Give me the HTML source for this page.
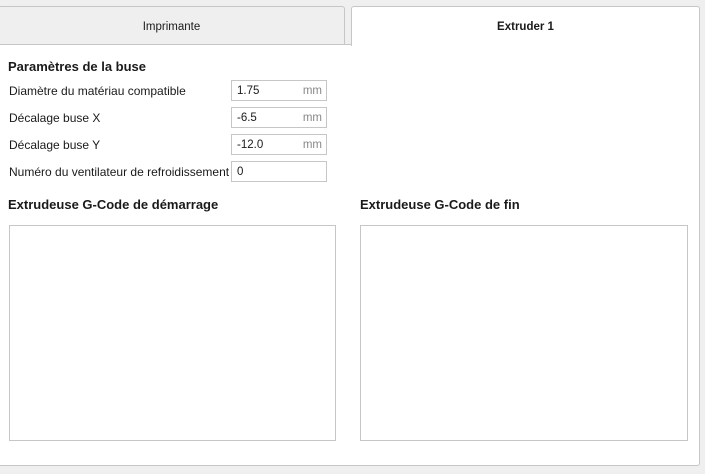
<!DOCTYPE html>
<html><head><style>
body{margin:0;width:705px;height:474px;background:#efefef;font-family:"Liberation Sans",sans-serif;position:relative;overflow:hidden;color:#1a1a1a}
.tab{position:absolute;top:6px;height:39px;border:1px solid #c6c6c6;border-bottom:none;border-radius:3px 3px 0 0;box-sizing:border-box;text-align:center;line-height:40px;font-size:11.5px}
.panel{position:absolute;left:-2px;top:44px;width:702px;height:422px;background:#fff;border:1px solid #c6c6c6;box-sizing:border-box;border-radius:0 0 3px 3px}
.lbl{position:absolute;left:9px;font-size:12px}
.box{position:absolute;left:231px;width:96px;height:21px;border:1px solid #c6c6c6;box-sizing:border-box;font-size:11.5px;line-height:20px;padding-left:5px;background:#fff}
.box span{position:absolute;right:4px;color:#888}
h{position:absolute;font-weight:bold;font-size:13px}
.ta{position:absolute;top:225px;height:216px;border:1px solid #c6c6c6;box-sizing:border-box;background:#fff}
</style></head><body>
<div class="tab" style="left:-2px;width:347px;background:#efefef;">Imprimante</div>
<div class="panel"></div>
<div class="tab" style="left:351px;width:349px;background:#fff;height:40px;font-weight:bold;">Extruder 1</div>
<h style="left:8px;top:59px">Paramètres de la buse</h>
<div class="lbl" style="top:84px">Diamètre du matériau compatible</div>
<div class="box" style="top:80px">1.75<span>mm</span></div>
<div class="lbl" style="top:111px">Décalage buse X</div>
<div class="box" style="top:107px">-6.5<span>mm</span></div>
<div class="lbl" style="top:138px">Décalage buse Y</div>
<div class="box" style="top:134px">-12.0<span>mm</span></div>
<div class="lbl" style="top:165px">Numéro du ventilateur de refroidissement</div>
<div class="box" style="top:161px">0</div>
<h style="left:8px;top:197px">Extrudeuse G-Code de démarrage</h>
<h style="left:360px;top:197px">Extrudeuse G-Code de fin</h>
<div class="ta" style="left:9px;width:327px"></div>
<div class="ta" style="left:360px;width:328px"></div>
</body></html>
